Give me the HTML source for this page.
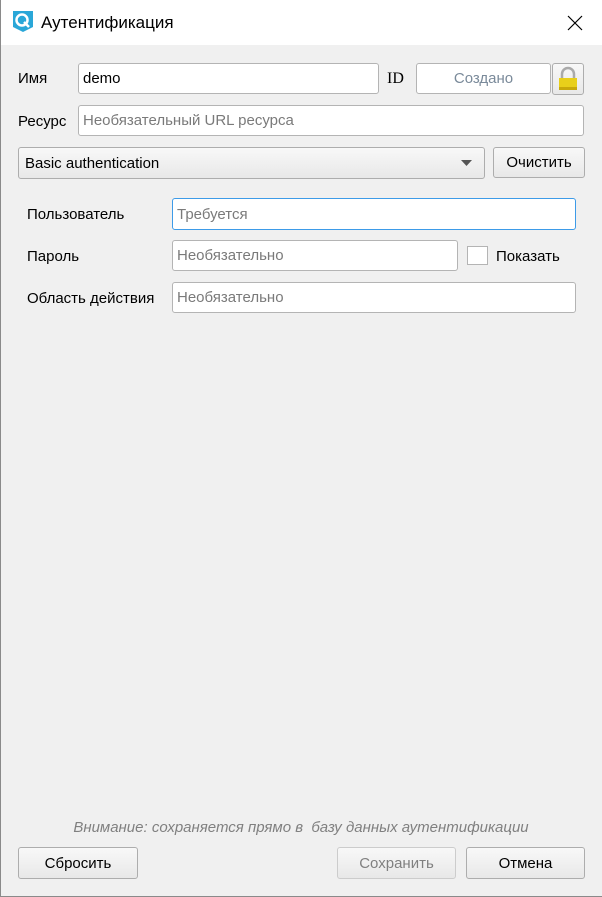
<!DOCTYPE html>
<html><head><meta charset="utf-8"><style>
*{box-sizing:border-box;margin:0;padding:0}
body{width:602px;height:897px;background:#f0f0f0;font-family:"Liberation Sans","Noto Sans CJK SC",sans-serif;font-size:15px;color:#000;position:relative;overflow:hidden}
.t{position:absolute;left:0;top:0;width:602px;height:45px;background:#fff}
.a{position:absolute}
.in{position:absolute;background:#fff;border:1px solid #b4b4b4;border-radius:3px;padding-left:4px;display:flex;align-items:center;color:#7a7a7a}
.btn{position:absolute;border:1px solid #adadad;border-radius:3px;background:linear-gradient(#f8f8f8,#e8e8e8);display:flex;align-items:center;justify-content:center}
.l{position:absolute;line-height:18px}
</style></head><body>
<div class="a" style="left:0;top:0;width:1px;height:897px;background:#8a8a8a;z-index:5"></div>
<div class="a" style="left:0;top:896px;width:602px;height:1px;background:#8a8a8a;z-index:5"></div>
<div class="t">
<svg class="a" style="left:11px;top:9px" width="24" height="24" viewBox="0 0 24 24"><path d="M2 2h20v16l-10 5-10-5z" fill="#2aa7d8"/><circle cx="11" cy="11" r="5.5" fill="none" stroke="#fff" stroke-width="2.5"/><path d="M13 13l5 5" stroke="#fff" stroke-width="2.5"/></svg>
<div class="l" style="left:41px;top:14px;font-size:17px">Аутентификация</div>
<svg class="a" style="left:567px;top:15px" width="16" height="16"><path d="M1 1L15 15M15 1L1 15" stroke="#000" stroke-width="1.2"/></svg>
</div>
<div class="l" style="left:18px;top:70px">Имя</div>
<div class="in" style="left:78px;top:63px;width:301px;height:31px;color:#000">demo</div>
<div class="l" style="left:387px;top:70px;font-family:'Liberation Serif',serif;font-size:16px">ID</div>
<div class="in" style="left:416px;top:63px;width:135px;height:31px;justify-content:center;padding:0;color:#7a8a9a">Создано</div>
<div class="btn" style="left:552px;top:63px;width:32px;height:32px"><svg width="22" height="26" viewBox="0 0 22 26"><path d="M5 12V8a6 6 0 0 1 12 0v4" fill="none" stroke="#aaa" stroke-width="2.5"/><rect x="2" y="12" width="18" height="12" fill="#e8cf1a"/><rect x="2" y="21" width="18" height="3" fill="#c8a80a"/></svg></div>
<div class="l" style="left:18px;top:113px">Ресурс</div>
<div class="in" style="left:78px;top:105px;width:506px;height:31px">Необязательный URL ресурса</div>
<div class="btn" style="left:18px;top:147px;width:467px;height:32px;justify-content:flex-start;padding-left:6px">Basic authentication<svg class="a" style="left:442px;top:12px" width="11" height="7"><path d="M0 0h11L5.5 6z" fill="#555"/></svg></div>
<div class="btn" style="left:493px;top:147px;width:92px;height:31px">Очистить</div>
<div class="l" style="left:27px;top:206px">Пользователь</div>
<div class="in" style="left:172px;top:198px;width:404px;height:32px;border-color:#3d9be8">Требуется</div>
<div class="l" style="left:27px;top:248px">Пароль</div>
<div class="in" style="left:172px;top:240px;width:286px;height:31px">Необязательно</div>
<div class="a" style="left:467px;top:246px;width:21px;height:19px;background:#fff;border:1px solid #b4b4b4"></div>
<div class="l" style="left:496px;top:248px">Показать</div>
<div class="l" style="left:27px;top:290px">Область действия</div>
<div class="in" style="left:172px;top:282px;width:404px;height:31px">Необязательно</div>
<div class="l" style="left:0;width:602px;text-align:center;top:819px;font-style:italic;color:#808080">Внимание: сохраняется прямо в &nbsp;базу данных аутентификации</div>
<div class="btn" style="left:18px;top:847px;width:120px;height:32px">Сбросить</div>
<div class="btn" style="left:337px;top:847px;width:119px;height:32px;color:#808080;border-color:#ccc">Сохранить</div>
<div class="btn" style="left:466px;top:847px;width:119px;height:32px">Отмена</div>
</body></html>
